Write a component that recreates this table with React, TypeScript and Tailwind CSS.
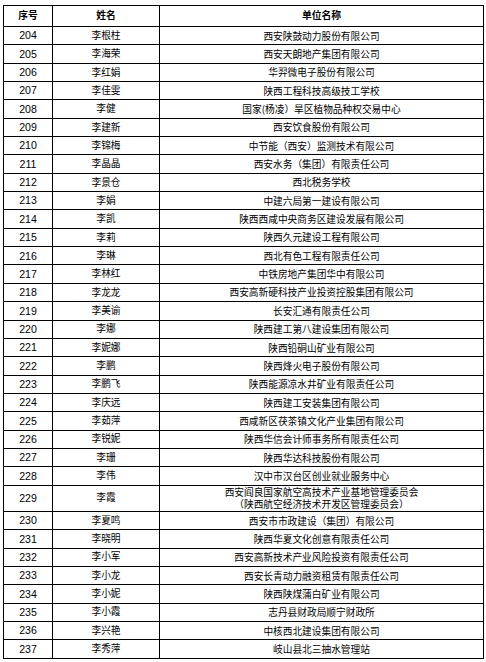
import React from "react";

const rows: [string, string, string[]][] = [
  ["204", "李根柱", ["西安陕鼓动力股份有限公司"]],
  ["205", "李海荣", ["西安天朗地产集团有限公司"]],
  ["206", "李红娟", ["华羿微电子股份有限公司"]],
  ["207", "李佳雯", ["陕西工程科技高级技工学校"]],
  ["208", "李健", ["国家(杨凌）旱区植物品种权交易中心"]],
  ["209", "李建新", ["西安饮食股份有限公司"]],
  ["210", "李锦梅", ["中节能（西安）监测技术有限公司"]],
  ["211", "李晶晶", ["西安水务（集团）有限责任公司"]],
  ["212", "李景仓", ["西北税务学校"]],
  ["213", "李娟", ["中建六局第一建设有限公司"]],
  ["214", "李凯", ["陕西西咸中央商务区建设发展有限公司"]],
  ["215", "李莉", ["陕西久元建设工程有限公司"]],
  ["216", "李琳", ["西北有色工程有限责任公司"]],
  ["217", "李林红", ["中铁房地产集团华中有限公司"]],
  ["218", "李龙龙", ["西安高新硬科技产业投资控股集团有限公司"]],
  ["219", "李美谕", ["长安汇通有限责任公司"]],
  ["220", "李娜", ["陕西建工第八建设集团有限公司"]],
  ["221", "李妮娜", ["陕西铅硐山矿业有限公司"]],
  ["222", "李鹏", ["陕西烽火电子股份有限公司"]],
  ["223", "李鹏飞", ["陕西能源凉水井矿业有限责任公司"]],
  ["224", "李庆远", ["陕西建工安装集团有限公司"]],
  ["225", "李茹萍", ["西咸新区茯茶镇文化产业集团有限公司"]],
  ["226", "李锐妮", ["陕西华信会计师事务所有限责任公司"]],
  ["227", "李珊", ["陕西华达科技股份有限公司"]],
  ["228", "李伟", ["汉中市汉台区创业就业服务中心"]],
  ["229", "李霞", ["西安阎良国家航空高技术产业基地管理委员会", "（陕西航空经济技术开发区管理委员会）"]],
  ["230", "李夏鸣", ["西安市市政建设（集团）有限公司"]],
  ["231", "李晓明", ["陕西华夏文化创意有限责任公司"]],
  ["232", "李小军", ["西安高新技术产业风险投资有限责任公司"]],
  ["233", "李小龙", ["西安长青动力融资租赁有限责任公司"]],
  ["234", "李小妮", ["陕西陕煤蒲白矿业有限公司"]],
  ["235", "李小霞", ["志丹县财政局顺宁财政所"]],
  ["236", "李兴艳", ["中核西北建设集团有限公司"]],
  ["237", "李秀萍", ["岐山县北三抽水管理站"]],
];

const cjk = "font-['Noto_Sans_CJK_SC','Noto_Sans',sans-serif]";

export default function App() {
  return (
    <div className="w-[486px] h-[662px] bg-white pt-[5px] pl-[3px] text-black">
      <table className="w-[480px] table-fixed border-collapse">
        <colgroup>
          <col className="w-[49px]" />
          <col className="w-[107px]" />
          <col className="w-[324px]" />
        </colgroup>
        <thead>
          <tr className="h-[21px]">
            <th className={`border border-black p-0 text-center align-middle text-[9.8px] leading-none font-bold ${cjk}`}>序号</th>
            <th className={`border border-black p-0 text-center align-middle text-[9.8px] leading-none font-bold ${cjk}`}>姓名</th>
            <th className={`border border-black p-0 text-center align-middle text-[9.8px] leading-none font-bold ${cjk}`}>单位名称</th>
          </tr>
        </thead>
        <tbody>
          {rows.map(([no, name, org]) => (
            <tr key={no} className={org.length > 1 ? "h-[26.3px]" : "h-[18.35px]"}>
              <td className="border border-black p-0 text-center align-middle text-[10.6px] leading-none font-['Liberation_Sans',Arial,sans-serif]">{no}</td>
              <td className={`border border-black p-0 text-center align-middle text-[9.7px] leading-none ${cjk}`}>{name}</td>
              <td className={`border border-black p-0 text-center align-middle text-[9.7px] leading-[12px] ${cjk} whitespace-nowrap`}>
                {org.map((l, i) => (
                  <div key={i}>{l}</div>
                ))}
              </td>
            </tr>
          ))}
        </tbody>
      </table>
    </div>
  );
}
